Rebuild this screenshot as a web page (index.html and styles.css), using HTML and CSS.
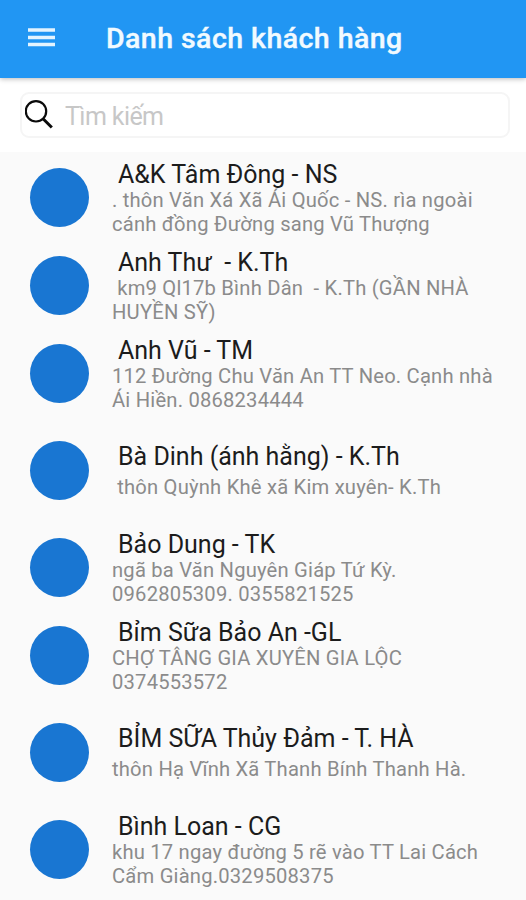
FILE: index.html
```html
<!DOCTYPE html>
<html lang="vi">
<head>
<meta charset="utf-8">
<title>Danh sách khách hàng</title>
<link rel="stylesheet" href="styles.css">
</head>
<body>
<header class="bar">
  <svg class="menu" width="28" height="20" viewBox="0 0 28 20"><path d="M0 2H27M0 9.500H27M0 16.500H27" stroke="#e3f4ff" stroke-width="3.300"/></svg>
  <h1 class="title">Danh sách khách hàng</h1>
</header>
<div class="search">
  <div class="field">
    <svg class="glass" width="30" height="30" viewBox="0 0 30 30" fill="none" stroke="#0a0a0a"><circle cx="11" cy="11.300" r="10.200" stroke-width="2.200"/><path d="M18.300 19L26.800 27.500" stroke-width="3"/></svg>
    <span class="hint">Tìm kiếm</span>
  </div>
</div>
<main class="list">
  <div class="row"><i class="avatar"></i><div class="text"><div class="name">A&amp;K Tâm Đông - NS</div><div class="addr">. thôn Văn Xá Xã Ái Quốc - NS. rìa ngoài
cánh đồng Đường sang Vũ Thượng</div></div></div>
  <div class="row"><i class="avatar"></i><div class="text"><div class="name">Anh Thư  - K.Th</div><div class="addr"> km9 Ql17b Bình Dân  - K.Th (GẦN NHÀ
HUYỀN SỸ)</div></div></div>
  <div class="row"><i class="avatar"></i><div class="text"><div class="name">Anh Vũ - TM</div><div class="addr">112 Đường Chu Văn An TT Neo. Cạnh nhà
Ái Hiền. 0868234444</div></div></div>
  <div class="row single"><i class="avatar"></i><div class="text"><div class="name">Bà Dinh (ánh hằng) - K.Th</div><div class="addr"> thôn Quỳnh Khê xã Kim xuyên- K.Th</div></div></div>
  <div class="row"><i class="avatar"></i><div class="text"><div class="name">Bảo Dung - TK</div><div class="addr">ngã ba Văn Nguyên Giáp Tứ Kỳ.
0962805309. 0355821525</div></div></div>
  <div class="row"><i class="avatar"></i><div class="text"><div class="name">Bỉm Sữa Bảo An -GL</div><div class="addr">CHỢ TÂNG GIA XUYÊN GIA LỘC
0374553572</div></div></div>
  <div class="row single"><i class="avatar"></i><div class="text"><div class="name">BỈM SỮA Thủy Đảm - T. HÀ</div><div class="addr">thôn Hạ Vĩnh Xã Thanh Bính Thanh Hà.</div></div></div>
  <div class="row"><i class="avatar"></i><div class="text"><div class="name">Bình Loan - CG</div><div class="addr">khu 17 ngay đường 5 rẽ vào TT Lai Cách
Cẩm Giàng.0329508375</div></div></div>
</main>
</body>
</html>
```
FILE: styles.css
```css
* { box-sizing: border-box; }
body {
  margin: 0;
  height: 900px;
  overflow: hidden;
  background: #fafafa;
  font-family: Roboto, "Noto Sans", sans-serif;
}
.bar {
  position: relative;
  display: flex;
  align-items: center;
  height: 78px;
  padding: 0 28px 2px;
  background: #2196f3;
  box-shadow: 0 1px 5px rgba(0, 0, 0, .28);
}
.menu { display: block; }
.title {
  margin: 2px 0 0 50px;
  color: #f1faff;
  font-size: 28.500px;
  font-weight: 500;
  letter-spacing: .45px;
  line-height: 34px;
  white-space: nowrap;
  -webkit-text-stroke: .4px #f1faff;
}
.search {
  height: 74px;
  padding: 14px 16px 0 20px;
  background: #fff;
}
.field {
  display: flex;
  align-items: center;
  height: 46px;
  padding-left: 3px;
  border: 2px solid #f5f5f5;
  border-radius: 9px;
}
.glass { display: block; }
.hint {
  margin: 4px 0 0 10px;
  color: #c7c7c7;
  font-size: 25px;
  letter-spacing: -.6px;
  line-height: 30px;
}
.list { padding-top: 1px; }
.row {
  display: flex;
  align-items: center;
  height: 88.2px;
  padding-left: 29.500px;
}
.single { height: 105.600px; }
.avatar {
  flex: none;
  width: 59px;
  height: 59px;
  border-radius: 50%;
  background: #1976d2;
}
.text {
  align-self: stretch;
  padding: 6.500px 0 0 23.500px;
  white-space: pre;
}
.name {
  padding-left: 6px;
  color: #1c1c1c;
  font-size: 25px;
  line-height: 30px;
}
.addr {
  margin-top: -.4px;
  color: #8b8b8b;
  font-size: 20.200px;
  letter-spacing: .2px;
  line-height: 23.700px;
}
.single .text { padding-top: 24.400px; }
.single .addr { padding-top: 4.200px; }
```
